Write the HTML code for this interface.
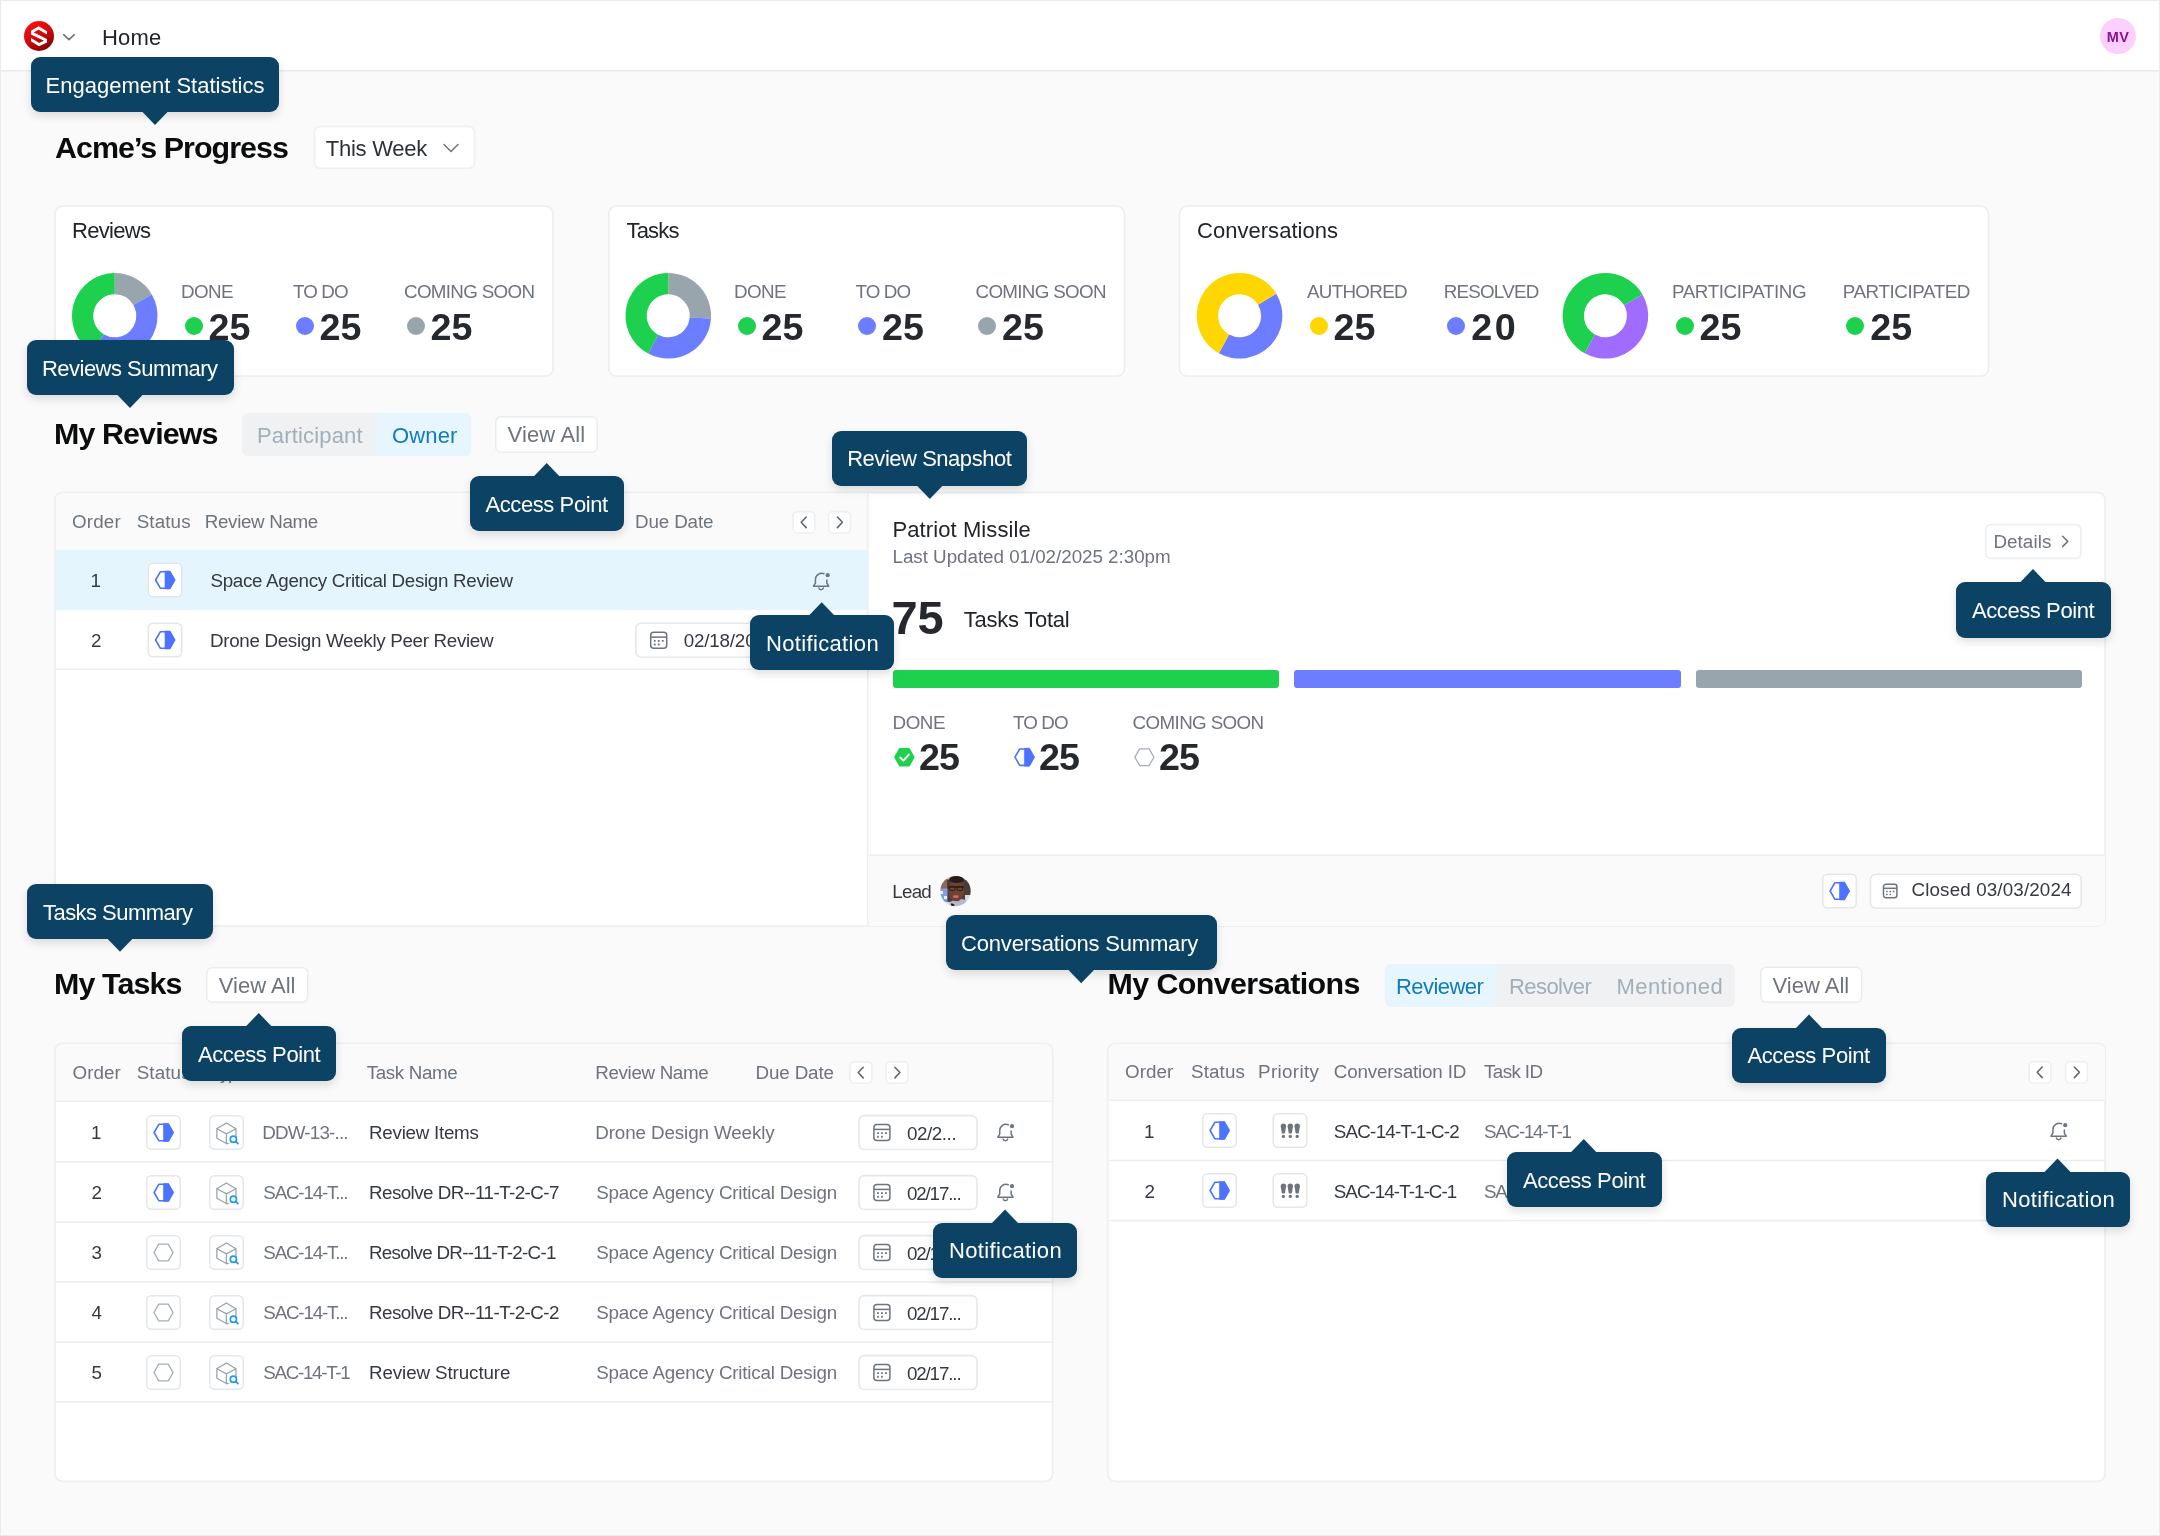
<!DOCTYPE html>
<html lang="en"><head><meta charset="utf-8"><title>Home</title>
<style>
html,body{margin:0;padding:0;}
body{width:2160px;height:1536px;position:relative;overflow:hidden;background:#fafafa;font-family:"Liberation Sans", sans-serif;}
.b{position:absolute;box-sizing:border-box;}
.t{position:absolute;white-space:nowrap;line-height:1;}
.tip{background:#0c4264;border-radius:9px;box-shadow:0 4px 10px rgba(0,0,0,.13);}
</style></head><body>
<div class="b" style="left:0;top:0;width:2160px;height:1536px;will-change:transform">
<div class="b" style="left:0px;top:0px;width:2160px;height:71px;background:#fff;"></div>
<svg class="b" style="left:0px;top:70px;" width="2161" height="3"><rect x="0.00" y="0.00" width="2160" height="1.5" fill="#e9ecef"/></svg>
<svg class="b" style="left:24px;top:21px;" width="32" height="32"><g transform="translate(0.00,0.00)"><defs><linearGradient id="lg" x1="0.25" y1="0" x2="0.8" y2="1"><stop offset="0" stop-color="#ff0d12"/><stop offset="0.5" stop-color="#cf0a0c"/><stop offset="1" stop-color="#7c0000"/></linearGradient></defs>
<circle cx="15" cy="15" r="15" fill="url(#lg)"/>
<clipPath id="lc"><rect x="7.1" y="0" width="15.8" height="30"/></clipPath>
<polyline clip-path="url(#lc)" points="25.6,13.4 14.7,6.9 6.6,11.6 23.2,19.7 15.0,23.6 4.4,17.0" fill="none" stroke="#fff" stroke-width="2.9" stroke-linejoin="miter" stroke-miterlimit="10"/></g></svg>
<svg class="b" style="left:62px;top:32px;" width="16" height="12"><g transform="translate(0.00,0.00)"><polyline points="1.7,2.7 7,7.7 12.3,2.7" fill="none" stroke="#6c757d" stroke-width="1.6" stroke-linecap="round" stroke-linejoin="round"/></g></svg>
<span class="t" style="top:27.02px;font-size:22px;font-weight:400;color:#212529;letter-spacing:0.184px;left:102.00px;">Home</span>
<div class="b" style="left:2100px;top:18px;width:36px;height:36px;background:#fbd0fe;border-radius:18px;"></div>
<span class="t" style="top:30.03px;font-size:14.5px;font-weight:700;color:#8a1496;letter-spacing:0.421px;left:2106.75px;">MV</span>
<span class="t" style="top:132.02px;font-size:30.4px;font-weight:700;color:#0b0c0e;letter-spacing:-0.949px;left:55.00px;">Acme’s Progress</span>
<svg class="b" style="left:310px;top:122px;" width="169" height="51"><rect x="4.50" y="4.50" width="160.00" height="41.80" rx="5.70" fill="#fff" stroke="#edeff1" stroke-width="1.6"/></svg>
<span class="t" style="top:138.02px;font-size:22px;font-weight:400;color:#2d3238;letter-spacing:-0.264px;left:325.80px;">This Week</span>
<svg class="b" style="left:442px;top:142px;" width="20" height="14"><g transform="translate(0.00,0.00)"><polyline points="2,2.5 9,9.5 16,2.5" fill="none" stroke="#6c757d" stroke-width="1.5" stroke-linecap="round" stroke-linejoin="round"/></g></svg>
<svg class="b" style="left:51px;top:202px;" width="506" height="178"><rect x="4.00" y="4.10" width="498.00" height="170.00" rx="7.60" fill="#fff" stroke="#edeff1" stroke-width="1.8"/></svg>
<span class="t" style="top:220.02px;font-size:22px;font-weight:400;color:#212529;letter-spacing:-0.689px;left:72.00px;">Reviews</span>
<svg class="b" style="left:0;top:0" width="2160" height="1536"><path d="M114.75,273.00 A42.8,42.8 0 0 1 151.82,294.40 L133.37,305.05 A21.5,21.5 0 0 0 114.75,294.30 Z" fill="#98a5ad"/><path d="M151.82,294.40 A42.8,42.8 0 0 1 92.71,352.49 L103.68,334.23 A21.5,21.5 0 0 0 133.37,305.05 Z" fill="#6c7dff"/><path d="M92.71,352.49 A42.8,42.8 0 0 1 114.75,273.00 L114.75,294.30 A21.5,21.5 0 0 0 103.68,334.23 Z" fill="#1dd14f"/></svg>
<span class="t" style="top:283.03px;font-size:18.8px;font-weight:400;color:#6c757d;letter-spacing:-0.578px;left:181.00px;">DONE</span>
<div class="b" style="left:184.5px;top:317px;width:18px;height:18px;background:#1dd14f;border-radius:9px;"></div>
<span class="t" style="top:309.03px;font-size:37.7px;font-weight:700;color:#25292e;letter-spacing:0.040px;left:208.50px;">25</span>
<span class="t" style="top:283.03px;font-size:18.8px;font-weight:400;color:#6c757d;letter-spacing:-0.881px;left:293.00px;">TO DO</span>
<div class="b" style="left:295.5px;top:317px;width:18px;height:18px;background:#6c7dff;border-radius:9px;"></div>
<span class="t" style="top:309.03px;font-size:37.7px;font-weight:700;color:#25292e;letter-spacing:0.040px;left:319.50px;">25</span>
<span class="t" style="top:283.03px;font-size:18.8px;font-weight:400;color:#6c757d;letter-spacing:-0.667px;left:404.00px;">COMING SOON</span>
<div class="b" style="left:406.5px;top:317px;width:18px;height:18px;background:#98a5ad;border-radius:9px;"></div>
<span class="t" style="top:309.03px;font-size:37.7px;font-weight:700;color:#25292e;letter-spacing:0.040px;left:430.50px;">25</span>
<svg class="b" style="left:604px;top:202px;" width="525" height="178"><rect x="4.80" y="4.10" width="515.70" height="170.00" rx="7.60" fill="#fff" stroke="#edeff1" stroke-width="1.8"/></svg>
<span class="t" style="top:220.02px;font-size:22px;font-weight:400;color:#212529;letter-spacing:-0.809px;left:626.50px;">Tasks</span>
<svg class="b" style="left:0;top:0" width="2160" height="1536"><path d="M668.25,273.00 A42.8,42.8 0 0 1 710.95,318.79 L689.70,317.30 A21.5,21.5 0 0 0 668.25,294.30 Z" fill="#98a5ad"/><path d="M710.95,318.79 A42.8,42.8 0 0 1 648.16,353.59 L658.16,334.78 A21.5,21.5 0 0 0 689.70,317.30 Z" fill="#6c7dff"/><path d="M648.16,353.59 A42.8,42.8 0 0 1 668.25,273.00 L668.25,294.30 A21.5,21.5 0 0 0 658.16,334.78 Z" fill="#1dd14f"/></svg>
<span class="t" style="top:283.03px;font-size:18.8px;font-weight:400;color:#6c757d;letter-spacing:-0.578px;left:734.00px;">DONE</span>
<div class="b" style="left:737.5px;top:317px;width:18px;height:18px;background:#1dd14f;border-radius:9px;"></div>
<span class="t" style="top:309.03px;font-size:37.7px;font-weight:700;color:#25292e;letter-spacing:0.040px;left:761.50px;">25</span>
<span class="t" style="top:283.03px;font-size:18.8px;font-weight:400;color:#6c757d;letter-spacing:-0.881px;left:855.50px;">TO DO</span>
<div class="b" style="left:858.0px;top:317px;width:18px;height:18px;background:#6c7dff;border-radius:9px;"></div>
<span class="t" style="top:309.03px;font-size:37.7px;font-weight:700;color:#25292e;letter-spacing:0.040px;left:882.00px;">25</span>
<span class="t" style="top:283.03px;font-size:18.8px;font-weight:400;color:#6c757d;letter-spacing:-0.667px;left:975.50px;">COMING SOON</span>
<div class="b" style="left:978.0px;top:317px;width:18px;height:18px;background:#98a5ad;border-radius:9px;"></div>
<span class="t" style="top:309.03px;font-size:37.7px;font-weight:700;color:#25292e;letter-spacing:0.040px;left:1002.00px;">25</span>
<svg class="b" style="left:1175px;top:202px;" width="818" height="178"><rect x="4.60" y="4.10" width="808.90" height="170.00" rx="7.60" fill="#fff" stroke="#edeff1" stroke-width="1.8"/></svg>
<span class="t" style="top:220.02px;font-size:22px;font-weight:400;color:#212529;letter-spacing:0.031px;left:1197.00px;">Conversations</span>
<svg class="b" style="left:0;top:0" width="2160" height="1536"><path d="M1276.29,293.76 A42.8,42.8 0 0 1 1218.85,353.23 L1229.18,334.60 A21.5,21.5 0 0 0 1258.03,304.73 Z" fill="#6c7dff"/><path d="M1218.85,353.23 A42.8,42.8 0 1 1 1276.29,293.76 L1258.03,304.73 A21.5,21.5 0 1 0 1229.18,334.60 Z" fill="#ffd600"/></svg>
<span class="t" style="top:283.03px;font-size:18.8px;font-weight:400;color:#6c757d;letter-spacing:-0.689px;left:1307.00px;">AUTHORED</span>
<div class="b" style="left:1309.5px;top:317px;width:18px;height:18px;background:#ffd600;border-radius:9px;"></div>
<span class="t" style="top:309.03px;font-size:37.7px;font-weight:700;color:#25292e;letter-spacing:0.040px;left:1333.50px;">25</span>
<span class="t" style="top:283.03px;font-size:18.8px;font-weight:400;color:#6c757d;letter-spacing:-0.761px;left:1443.70px;">RESOLVED</span>
<div class="b" style="left:1447.2px;top:317px;width:18px;height:18px;background:#6c7dff;border-radius:9px;"></div>
<span class="t" style="top:309.03px;font-size:37.7px;font-weight:700;color:#25292e;letter-spacing:2.540px;left:1471.20px;">20</span>
<svg class="b" style="left:0;top:0" width="2160" height="1536"><path d="M1642.47,294.40 A42.8,42.8 0 0 1 1584.65,353.23 L1594.98,334.60 A21.5,21.5 0 0 0 1624.02,305.05 Z" fill="#a06bff"/><path d="M1584.65,353.23 A42.8,42.8 0 1 1 1642.47,294.40 L1624.02,305.05 A21.5,21.5 0 1 0 1594.98,334.60 Z" fill="#1dd14f"/></svg>
<span class="t" style="top:283.03px;font-size:18.8px;font-weight:400;color:#6c757d;letter-spacing:-0.406px;left:1672.00px;">PARTICIPATING</span>
<div class="b" style="left:1675.5px;top:317px;width:18px;height:18px;background:#1dd14f;border-radius:9px;"></div>
<span class="t" style="top:309.03px;font-size:37.7px;font-weight:700;color:#25292e;letter-spacing:0.040px;left:1699.50px;">25</span>
<span class="t" style="top:283.03px;font-size:18.8px;font-weight:400;color:#6c757d;letter-spacing:-0.420px;left:1842.80px;">PARTICIPATED</span>
<div class="b" style="left:1846.3px;top:317px;width:18px;height:18px;background:#1dd14f;border-radius:9px;"></div>
<span class="t" style="top:309.03px;font-size:37.7px;font-weight:700;color:#25292e;letter-spacing:0.040px;left:1870.30px;">25</span>
<span class="t" style="top:418.02px;font-size:30.4px;font-weight:700;color:#0b0c0e;letter-spacing:-0.877px;left:54.00px;">My Reviews</span>
<div class="b" style="left:241.5px;top:412.5px;width:229.5px;height:43.5px;background:#eff1f3;border-radius:6px;"></div>
<div class="b" style="left:376px;top:412.5px;width:95px;height:43.5px;background:#e6f5fe;border-radius:6px;"></div>
<span class="t" style="top:425.02px;font-size:22px;font-weight:400;color:#a3afb8;letter-spacing:0.167px;left:257.00px;">Participant</span>
<span class="t" style="top:425.02px;font-size:22px;font-weight:400;color:#117cbd;letter-spacing:0.132px;left:392.00px;">Owner</span>
<svg class="b" style="left:492px;top:413px;" width="109" height="43"><rect x="3.75" y="3.75" width="101.50" height="35.50" rx="5.25" fill="#fff" stroke="#e9ecef" stroke-width="1.5"/></svg>
<span class="t" style="top:424.02px;font-size:22px;font-weight:400;color:#6c757d;letter-spacing:0.148px;left:507.50px;">View All</span>
<svg class="b" style="left:51px;top:488px;" width="2059" height="443"><rect x="4.00" y="4.50" width="2050.20" height="433.70" rx="7.60" fill="#fff" stroke="#edeff1" stroke-width="1.8"/></svg>
<div class="b" style="left:56px;top:493px;width:811.5px;height:56.5px;background:#fafafa;border-top-left-radius:7px;"></div>
<span class="t" style="top:513.03px;font-size:18.8px;font-weight:400;color:#6c757d;letter-spacing:0.187px;left:72.00px;">Order</span>
<span class="t" style="top:513.03px;font-size:18.8px;font-weight:400;color:#6c757d;letter-spacing:0.129px;left:136.70px;">Status</span>
<span class="t" style="top:513.03px;font-size:18.8px;font-weight:400;color:#6c757d;letter-spacing:-0.345px;left:204.80px;">Review Name</span>
<span class="t" style="top:513.03px;font-size:18.8px;font-weight:400;color:#6c757d;letter-spacing:-0.128px;left:635.00px;">Due Date</span>
<svg class="b" style="left:789px;top:507px;" width="30" height="30"><rect x="4.10" y="4.60" width="21.80" height="21.40" rx="4.20" fill="#fff" stroke="#edeff1" stroke-width="1.6"/></svg>
<svg class="b" style="left:792px;top:510px;" width="26" height="26"><g transform="translate(0.30,0.80)"><polyline points="13.9,6.2 8.9,11.5 13.9,16.8" fill="none" stroke="#5f6871" stroke-width="1.6" stroke-linecap="round" stroke-linejoin="round"/></g></svg>
<svg class="b" style="left:824px;top:507px;" width="31" height="30"><rect x="4.60" y="4.60" width="21.80" height="21.40" rx="4.20" fill="#fff" stroke="#edeff1" stroke-width="1.6"/></svg>
<svg class="b" style="left:827px;top:510px;" width="26" height="26"><g transform="translate(0.80,0.80)"><polyline points="9.6,6.2 14.6,11.5 9.6,16.8" fill="none" stroke="#5f6871" stroke-width="1.6" stroke-linecap="round" stroke-linejoin="round"/></g></svg>
<div class="b" style="left:56px;top:549.5px;width:811.5px;height:60px;background:#e5f5fe;"></div>
<svg class="b" style="left:56px;top:668px;" width="813" height="4"><rect x="0.00" y="0.60" width="811.5" height="1.4" fill="#eaecef"/></svg>
<svg class="b" style="left:867px;top:493px;" width="3" height="434"><rect x="0.00" y="0.00" width="1.5" height="433" fill="#eceef0"/></svg>
<span class="t" style="top:572.03px;font-size:18.8px;font-weight:400;color:#343a40;left:90.50px;">1</span>
<svg class="b" style="left:144px;top:559px;" width="42" height="42"><rect x="4.25" y="4.25" width="33.50" height="33.50" rx="4.75" fill="#fff" stroke="#e4e6e8" stroke-width="1.5"/></svg>
<svg class="b" style="left:0;top:0" width="2160" height="1536"><polygon points="155.60,580.00 160.30,571.80 169.70,571.80 174.40,580.00 169.70,588.20 160.30,588.20" fill="none" stroke="#4b73ff" stroke-width="1.6" stroke-linejoin="round"/><polygon points="165.00,571.00 170.10,571.00 175.10,580.00 170.10,589.00 165.00,589.00" fill="#4b73ff" stroke="#4b73ff" stroke-width="0.6" stroke-linejoin="round"/></svg>
<span class="t" style="top:572.03px;font-size:18.8px;font-weight:400;color:#343a40;letter-spacing:-0.313px;left:210.50px;">Space Agency Critical Design Review</span>
<svg class="b" style="left:812px;top:571px;" width="21" height="23"><g transform="translate(0.00,0.00) scale(1.0389,1.0400) translate(-0.0,-0.0)"><path d="M11.6,2.6 A6,6 0 0 0 3.3,8.2 V11.6 L1.4,14.6 H16.1 L14.3,11.6 V8.6" fill="none" stroke="#6c757d" stroke-width="1.45" stroke-linecap="round" stroke-linejoin="round"/><path d="M6.6,16.3 A2.2,2.2 0 0 0 10.9,16.3" fill="none" stroke="#6c757d" stroke-width="1.45" stroke-linecap="round"/><circle cx="15.1" cy="4" r="2" fill="#6c757d"/></g></svg>
<span class="t" style="top:632.03px;font-size:18.8px;font-weight:400;color:#343a40;left:91.00px;">2</span>
<svg class="b" style="left:144px;top:619px;" width="42" height="42"><rect x="4.25" y="4.25" width="33.50" height="33.50" rx="4.75" fill="#fff" stroke="#e4e6e8" stroke-width="1.5"/></svg>
<svg class="b" style="left:0;top:0" width="2160" height="1536"><polygon points="155.60,640.00 160.30,631.80 169.70,631.80 174.40,640.00 169.70,648.20 160.30,648.20" fill="none" stroke="#4b73ff" stroke-width="1.6" stroke-linejoin="round"/><polygon points="165.00,631.00 170.10,631.00 175.10,640.00 170.10,649.00 165.00,649.00" fill="#4b73ff" stroke="#4b73ff" stroke-width="0.6" stroke-linejoin="round"/></svg>
<span class="t" style="top:632.03px;font-size:18.8px;font-weight:400;color:#343a40;letter-spacing:-0.314px;left:210.00px;">Drone Design Weekly Peer Review</span>
<svg class="b" style="left:632px;top:619px;" width="206" height="42"><rect x="3.80" y="4.30" width="198.40" height="33.90" rx="5.20" fill="#fff" stroke="#e6e8ea" stroke-width="1.6"/></svg>
<svg class="b" style="left:649px;top:631px;" width="21" height="21"><g transform="translate(0.90,0.50) scale(1.0000,1.0000) translate(-0.0,-0.0)"><rect x="0.8" y="0.8" width="16" height="16" rx="3" fill="none" stroke="#6c757d" stroke-width="1.50"/><line x1="0.8" y1="5.6" x2="16.8" y2="5.6" stroke="#6c757d" stroke-width="1.50"/><rect x="3.9" y="8.4" width="1.9" height="1.9" rx="0.4" fill="#6c757d"/><rect x="7.9" y="8.4" width="1.9" height="1.9" rx="0.4" fill="#6c757d"/><rect x="11.9" y="8.4" width="1.9" height="1.9" rx="0.4" fill="#6c757d"/><rect x="3.9" y="12.0" width="1.9" height="1.9" rx="0.4" fill="#6c757d"/><rect x="7.9" y="12.0" width="1.9" height="1.9" rx="0.4" fill="#6c757d"/></g></svg>
<span class="t" style="top:632.03px;font-size:18.8px;font-weight:400;color:#343a40;letter-spacing:-0.173px;left:683.70px;">02/18/2025</span>
<span class="t" style="top:519.02px;font-size:22px;font-weight:400;color:#212529;letter-spacing:0.094px;left:892.50px;">Patriot Missile</span>
<span class="t" style="top:548.03px;font-size:18.8px;font-weight:400;color:#6c757d;letter-spacing:-0.023px;left:892.50px;">Last Updated 01/02/2025 2:30pm</span>
<svg class="b" style="left:1982px;top:520px;" width="103" height="43"><rect x="3.80" y="4.60" width="95.10" height="33.80" rx="5.20" fill="#fff" stroke="#edeff1" stroke-width="1.6"/></svg>
<span class="t" style="top:533.03px;font-size:18.8px;font-weight:400;color:#6c757d;letter-spacing:0.081px;left:1993.40px;">Details</span>
<svg class="b" style="left:2058px;top:533px;" width="16" height="19"><g transform="translate(0.00,0.00)"><polyline points="4.6,3.2 9.8,8.4 4.6,13.6" fill="none" stroke="#6c757d" stroke-width="1.5" stroke-linecap="round" stroke-linejoin="round"/></g></svg>
<span class="t" style="top:594.03px;font-size:47px;font-weight:700;color:#25292e;letter-spacing:-0.139px;left:891.60px;">75</span>
<span class="t" style="top:609.02px;font-size:22px;font-weight:400;color:#212529;letter-spacing:-0.243px;left:963.70px;">Tasks Total</span>
<div class="b" style="left:892.5px;top:670px;width:386px;height:18.4px;background:#1dd14f;border-radius:3px;"></div>
<div class="b" style="left:1294px;top:670px;width:386.5px;height:18.4px;background:#6c7dff;border-radius:3px;"></div>
<div class="b" style="left:1695.5px;top:670px;width:386.5px;height:18.4px;background:#98a5ad;border-radius:3px;"></div>
<span class="t" style="top:714.03px;font-size:18.8px;font-weight:400;color:#6c757d;letter-spacing:-0.412px;left:892.50px;">DONE</span>
<span class="t" style="top:714.03px;font-size:18.8px;font-weight:400;color:#6c757d;letter-spacing:-0.881px;left:1013.00px;">TO DO</span>
<span class="t" style="top:714.03px;font-size:18.8px;font-weight:400;color:#6c757d;letter-spacing:-0.617px;left:1132.60px;">COMING SOON</span>
<svg class="b" style="left:0;top:0" width="2160" height="1536"><polygon points="894.95,757.20 899.67,748.75 909.12,748.75 913.85,757.20 909.12,765.65 899.67,765.65" fill="#1dd14f" stroke="#1dd14f" stroke-width="1.5" stroke-linejoin="round"/><polyline points="900.20,757.50 903.40,760.60 908.80,754.60" fill="none" stroke="#fff" stroke-width="2" stroke-linecap="round" stroke-linejoin="round"/><polygon points="1015.00,757.20 1019.70,749.00 1029.10,749.00 1033.80,757.20 1029.10,765.40 1019.70,765.40" fill="none" stroke="#4b73ff" stroke-width="1.6" stroke-linejoin="round"/><polygon points="1024.40,748.20 1029.50,748.20 1034.50,757.20 1029.50,766.20 1024.40,766.20" fill="#4b73ff" stroke="#4b73ff" stroke-width="0.6" stroke-linejoin="round"/><polygon points="1134.85,757.20 1139.62,748.85 1149.18,748.85 1153.95,757.20 1149.18,765.55 1139.62,765.55" fill="none" stroke="#a3aeb6" stroke-width="1.3" stroke-linejoin="round"/></svg>
<span class="t" style="top:739.03px;font-size:37.7px;font-weight:700;color:#25292e;letter-spacing:-0.960px;left:919.00px;">25</span>
<span class="t" style="top:739.03px;font-size:37.7px;font-weight:700;color:#25292e;letter-spacing:-0.960px;left:1039.00px;">25</span>
<span class="t" style="top:739.03px;font-size:37.7px;font-weight:700;color:#25292e;letter-spacing:-0.960px;left:1159.00px;">25</span>
<div class="b" style="left:868.5px;top:855px;width:1236px;height:70.5px;background:#fafafa;border-bottom-right-radius:7px;"></div>
<svg class="b" style="left:868px;top:854px;" width="1238" height="3"><rect x="0.50" y="0.50" width="1236" height="1.4" fill="#eaecef"/></svg>
<span class="t" style="top:883.03px;font-size:18.8px;font-weight:400;color:#343a40;letter-spacing:-0.779px;left:892.30px;">Lead</span>
<svg class="b" style="left:0;top:0" width="2160" height="1536"><defs><clipPath id="av"><circle cx="955.5" cy="891" r="15.2"/></clipPath>
<filter id="avb" x="-10%" y="-10%" width="120%" height="120%"><feGaussianBlur stdDeviation="0.7"/></filter></defs>
<g clip-path="url(#av)"><g filter="url(#avb)">
<rect x="938" y="873" width="36" height="36" fill="#4b3d36"/>
<rect x="938" y="873" width="36" height="6.5" fill="#cfc8b6"/>
<rect x="938" y="879" width="9" height="10" fill="#8d6a58"/>
<rect x="938" y="888.5" width="9.5" height="14" fill="#7f9ee0"/>
<rect x="940" y="891" width="3" height="3" fill="#e9eefb"/><rect x="944" y="896" width="3" height="3" fill="#e9eefb"/>
<rect x="938" y="902" width="12" height="6" fill="#d9dde4"/>
<rect x="965" y="895" width="10" height="14" fill="#d5dbe6"/>
<path d="M948,908 L950,902 Q957,897 966,900 L971,908 Z" fill="#b4b9cc"/>
<path d="M950,908 L951.5,903 L955,905 Z" fill="#1d1a1a"/>
<ellipse cx="956.3" cy="890.5" rx="7.8" ry="10.8" fill="#6f4331"/>
<ellipse cx="956.5" cy="879.5" rx="7.5" ry="3.6" fill="#2a1f1b"/>
<rect x="948.5" y="886.3" width="15.5" height="1.5" fill="#2b1e19"/>
<rect x="949.3" y="886.3" width="5.8" height="4.2" rx="1.6" fill="none" stroke="#2b1e19" stroke-width="1"/>
<rect x="957" y="886.3" width="5.8" height="4.2" rx="1.6" fill="none" stroke="#2b1e19" stroke-width="1"/>
<ellipse cx="955.8" cy="896.6" rx="3" ry="1.4" fill="#cf6f6f"/>
</g></g></svg>
<svg class="b" style="left:1819px;top:870px;" width="41" height="42"><rect x="3.75" y="4.25" width="33.50" height="33.50" rx="4.75" fill="#fff" stroke="#e4e6e8" stroke-width="1.5"/></svg>
<svg class="b" style="left:0;top:0" width="2160" height="1536"><polygon points="1830.10,891.00 1834.80,882.80 1844.20,882.80 1848.90,891.00 1844.20,899.20 1834.80,899.20" fill="none" stroke="#4b73ff" stroke-width="1.6" stroke-linejoin="round"/><polygon points="1839.50,882.00 1844.60,882.00 1849.60,891.00 1844.60,900.00 1839.50,900.00" fill="#4b73ff" stroke="#4b73ff" stroke-width="0.6" stroke-linejoin="round"/></svg>
<svg class="b" style="left:1866px;top:870px;" width="220" height="42"><rect x="4.45" y="4.25" width="210.80" height="33.90" rx="5.25" fill="#fff" stroke="#e4e6e8" stroke-width="1.5"/></svg>
<svg class="b" style="left:1882px;top:883px;" width="18" height="18"><g transform="translate(0.80,0.60) scale(0.8409,0.8409) translate(-0.0,-0.0)"><rect x="0.8" y="0.8" width="16" height="16" rx="3" fill="none" stroke="#6c757d" stroke-width="1.78"/><line x1="0.8" y1="5.6" x2="16.8" y2="5.6" stroke="#6c757d" stroke-width="1.78"/><rect x="3.9" y="8.4" width="1.9" height="1.9" rx="0.4" fill="#6c757d"/><rect x="7.9" y="8.4" width="1.9" height="1.9" rx="0.4" fill="#6c757d"/><rect x="11.9" y="8.4" width="1.9" height="1.9" rx="0.4" fill="#6c757d"/><rect x="3.9" y="12.0" width="1.9" height="1.9" rx="0.4" fill="#6c757d"/><rect x="7.9" y="12.0" width="1.9" height="1.9" rx="0.4" fill="#6c757d"/></g></svg>
<span class="t" style="top:881.03px;font-size:18.8px;font-weight:400;color:#343a40;letter-spacing:0.142px;left:1911.50px;">Closed 03/03/2024</span>
<span class="t" style="top:968.02px;font-size:30.4px;font-weight:700;color:#0b0c0e;letter-spacing:-0.882px;left:54.00px;">My Tasks</span>
<svg class="b" style="left:203px;top:964px;" width="109" height="42"><rect x="3.75" y="3.75" width="101.00" height="34.50" rx="5.25" fill="#fff" stroke="#e9ecef" stroke-width="1.5"/></svg>
<span class="t" style="top:975.02px;font-size:22px;font-weight:400;color:#6c757d;letter-spacing:0.006px;left:218.75px;">View All</span>
<svg class="b" style="left:51px;top:1039px;" width="1006" height="447"><rect x="4.00" y="4.30" width="997.70" height="438.00" rx="7.60" fill="#fff" stroke="#edeff1" stroke-width="1.8"/></svg>
<div class="b" style="left:56px;top:1044px;width:996px;height:57.5px;background:#fafafa;border-radius:7px 7px 0 0;"></div>
<svg class="b" style="left:56px;top:1100px;" width="997" height="3"><rect x="0.00" y="0.60" width="996" height="1.4" fill="#eaecef"/></svg>
<span class="t" style="top:1064.03px;font-size:18.8px;font-weight:400;color:#6c757d;letter-spacing:0.062px;left:72.50px;">Order</span>
<span class="t" style="top:1064.03px;font-size:18.8px;font-weight:400;color:#6c757d;letter-spacing:0.129px;left:136.70px;">Status</span>
<span class="t" style="top:1064.03px;font-size:18.8px;font-weight:400;color:#6c757d;letter-spacing:-1.424px;left:211.00px;">Type</span>
<span class="t" style="top:1064.03px;font-size:18.8px;font-weight:400;color:#6c757d;letter-spacing:-0.373px;left:366.75px;">Task Name</span>
<span class="t" style="top:1064.03px;font-size:18.8px;font-weight:400;color:#6c757d;letter-spacing:-0.345px;left:595.25px;">Review Name</span>
<span class="t" style="top:1064.03px;font-size:18.8px;font-weight:400;color:#6c757d;letter-spacing:-0.128px;left:755.50px;">Due Date</span>
<svg class="b" style="left:846px;top:1058px;" width="30" height="30"><rect x="4.10" y="3.85" width="21.80" height="21.40" rx="4.20" fill="#fff" stroke="#edeff1" stroke-width="1.6"/></svg>
<svg class="b" style="left:849px;top:1061px;" width="26" height="25"><g transform="translate(0.30,0.05)"><polyline points="13.9,6.2 8.9,11.5 13.9,16.8" fill="none" stroke="#5f6871" stroke-width="1.6" stroke-linecap="round" stroke-linejoin="round"/></g></svg>
<svg class="b" style="left:882px;top:1058px;" width="30" height="30"><rect x="4.10" y="3.85" width="21.80" height="21.40" rx="4.20" fill="#fff" stroke="#edeff1" stroke-width="1.6"/></svg>
<svg class="b" style="left:885px;top:1061px;" width="26" height="25"><g transform="translate(0.30,0.05)"><polyline points="9.6,6.2 14.6,11.5 9.6,16.8" fill="none" stroke="#5f6871" stroke-width="1.6" stroke-linecap="round" stroke-linejoin="round"/></g></svg>
<svg class="b" style="left:56px;top:1161px;" width="997" height="3"><rect x="0.00" y="0.30" width="996" height="1.4" fill="#eaecef"/></svg>
<span class="t" style="top:1124.02px;font-size:18.8px;font-weight:400;color:#343a40;left:91.00px;">1</span>
<svg class="b" style="left:143px;top:1112px;" width="41" height="41"><rect x="3.75" y="3.75" width="33.50" height="33.50" rx="4.75" fill="#fff" stroke="#e4e6e8" stroke-width="1.5"/></svg>
<svg class="b" style="left:0;top:0" width="2160" height="1536"><polygon points="154.10,1132.50 158.80,1124.30 168.20,1124.30 172.90,1132.50 168.20,1140.70 158.80,1140.70" fill="none" stroke="#4b73ff" stroke-width="1.6" stroke-linejoin="round"/><polygon points="163.50,1123.50 168.60,1123.50 173.60,1132.50 168.60,1141.50 163.50,1141.50" fill="#4b73ff" stroke="#4b73ff" stroke-width="0.6" stroke-linejoin="round"/></svg>
<svg class="b" style="left:206px;top:1112px;" width="41" height="41"><rect x="3.75" y="3.75" width="33.50" height="33.50" rx="4.75" fill="#fff" stroke="#e4e6e8" stroke-width="1.5"/></svg>
<svg class="b" style="left:0;top:0" width="2160" height="1536"><path d="M235.9,1136.5 V1128.7 L226.4,1123.0 L216.9,1128.7 V1138.3 L226.4,1143.5 H228.2" fill="none" stroke="#98a5ad" stroke-width="1.3" stroke-linejoin="round" stroke-linecap="round"/><path d="M216.9,1128.7 L226.4,1133.9 L235.9,1128.7 M226.4,1133.9 V1143.5" fill="none" stroke="#98a5ad" stroke-width="1.3" stroke-linejoin="round" stroke-linecap="round"/><circle cx="233.4" cy="1139.2" r="3.1" fill="#fff" stroke="#1c9bef" stroke-width="1.7"/><line x1="235.9" y1="1141.6" x2="238" y2="1143.6" stroke="#1c9bef" stroke-width="1.7" stroke-linecap="round"/></svg>
<span class="t" style="top:1124.02px;font-size:18.8px;font-weight:400;color:#6c757d;letter-spacing:-0.817px;left:262.30px;">DDW-13-...</span>
<span class="t" style="top:1124.02px;font-size:18.8px;font-weight:400;color:#343a40;letter-spacing:-0.257px;left:369.00px;">Review Items</span>
<span class="t" style="top:1124.02px;font-size:18.8px;font-weight:400;color:#6c757d;letter-spacing:-0.105px;left:595.25px;">Drone Design Weekly</span>
<svg class="b" style="left:855px;top:1111px;" width="126" height="43"><rect x="4.00" y="4.60" width="118.00" height="33.90" rx="5.20" fill="#fff" stroke="#e6e8ea" stroke-width="1.6"/></svg>
<svg class="b" style="left:873px;top:1123px;" width="20" height="21"><g transform="translate(0.10,0.80) scale(1.0000,1.0000) translate(-0.0,-0.0)"><rect x="0.8" y="0.8" width="16" height="16" rx="3" fill="none" stroke="#6c757d" stroke-width="1.50"/><line x1="0.8" y1="5.6" x2="16.8" y2="5.6" stroke="#6c757d" stroke-width="1.50"/><rect x="3.9" y="8.4" width="1.9" height="1.9" rx="0.4" fill="#6c757d"/><rect x="7.9" y="8.4" width="1.9" height="1.9" rx="0.4" fill="#6c757d"/><rect x="11.9" y="8.4" width="1.9" height="1.9" rx="0.4" fill="#6c757d"/><rect x="3.9" y="12.0" width="1.9" height="1.9" rx="0.4" fill="#6c757d"/><rect x="7.9" y="12.0" width="1.9" height="1.9" rx="0.4" fill="#6c757d"/></g></svg>
<span class="t" style="top:1125.02px;font-size:18.8px;font-weight:400;color:#343a40;letter-spacing:-0.415px;left:906.90px;">02/2...</span>
<svg class="b" style="left:996px;top:1122px;" width="21" height="23"><g transform="translate(0.30,0.00) scale(1.0389,1.0400) translate(-0.0,-0.0)"><path d="M11.6,2.6 A6,6 0 0 0 3.3,8.2 V11.6 L1.4,14.6 H16.1 L14.3,11.6 V8.6" fill="none" stroke="#6c757d" stroke-width="1.45" stroke-linecap="round" stroke-linejoin="round"/><path d="M6.6,16.3 A2.2,2.2 0 0 0 10.9,16.3" fill="none" stroke="#6c757d" stroke-width="1.45" stroke-linecap="round"/><circle cx="15.1" cy="4" r="2" fill="#6c757d"/></g></svg>
<svg class="b" style="left:56px;top:1221px;" width="997" height="3"><rect x="0.00" y="0.30" width="996" height="1.4" fill="#eaecef"/></svg>
<span class="t" style="top:1184.02px;font-size:18.8px;font-weight:400;color:#343a40;left:91.50px;">2</span>
<svg class="b" style="left:143px;top:1172px;" width="41" height="41"><rect x="3.75" y="3.75" width="33.50" height="33.50" rx="4.75" fill="#fff" stroke="#e4e6e8" stroke-width="1.5"/></svg>
<svg class="b" style="left:0;top:0" width="2160" height="1536"><polygon points="154.10,1192.50 158.80,1184.30 168.20,1184.30 172.90,1192.50 168.20,1200.70 158.80,1200.70" fill="none" stroke="#4b73ff" stroke-width="1.6" stroke-linejoin="round"/><polygon points="163.50,1183.50 168.60,1183.50 173.60,1192.50 168.60,1201.50 163.50,1201.50" fill="#4b73ff" stroke="#4b73ff" stroke-width="0.6" stroke-linejoin="round"/></svg>
<svg class="b" style="left:206px;top:1172px;" width="41" height="41"><rect x="3.75" y="3.75" width="33.50" height="33.50" rx="4.75" fill="#fff" stroke="#e4e6e8" stroke-width="1.5"/></svg>
<svg class="b" style="left:0;top:0" width="2160" height="1536"><path d="M235.9,1196.5 V1188.7 L226.4,1183.0 L216.9,1188.7 V1198.3 L226.4,1203.5 H228.2" fill="none" stroke="#98a5ad" stroke-width="1.3" stroke-linejoin="round" stroke-linecap="round"/><path d="M216.9,1188.7 L226.4,1193.9 L235.9,1188.7 M226.4,1193.9 V1203.5" fill="none" stroke="#98a5ad" stroke-width="1.3" stroke-linejoin="round" stroke-linecap="round"/><circle cx="233.4" cy="1199.2" r="3.1" fill="#fff" stroke="#1c9bef" stroke-width="1.7"/><line x1="235.9" y1="1201.6" x2="238" y2="1203.6" stroke="#1c9bef" stroke-width="1.7" stroke-linecap="round"/></svg>
<span class="t" style="top:1184.02px;font-size:18.8px;font-weight:400;color:#6c757d;letter-spacing:-1.184px;left:263.30px;">SAC-14-T...</span>
<span class="t" style="top:1184.02px;font-size:18.8px;font-weight:400;color:#343a40;letter-spacing:-0.555px;left:369.00px;">Resolve DR--11-T-2-C-7</span>
<span class="t" style="top:1184.02px;font-size:18.8px;font-weight:400;color:#6c757d;letter-spacing:-0.202px;left:596.25px;">Space Agency Critical Design</span>
<svg class="b" style="left:855px;top:1171px;" width="126" height="43"><rect x="4.00" y="4.60" width="118.00" height="33.90" rx="5.20" fill="#fff" stroke="#e6e8ea" stroke-width="1.6"/></svg>
<svg class="b" style="left:873px;top:1183px;" width="20" height="21"><g transform="translate(0.10,0.80) scale(1.0000,1.0000) translate(-0.0,-0.0)"><rect x="0.8" y="0.8" width="16" height="16" rx="3" fill="none" stroke="#6c757d" stroke-width="1.50"/><line x1="0.8" y1="5.6" x2="16.8" y2="5.6" stroke="#6c757d" stroke-width="1.50"/><rect x="3.9" y="8.4" width="1.9" height="1.9" rx="0.4" fill="#6c757d"/><rect x="7.9" y="8.4" width="1.9" height="1.9" rx="0.4" fill="#6c757d"/><rect x="11.9" y="8.4" width="1.9" height="1.9" rx="0.4" fill="#6c757d"/><rect x="3.9" y="12.0" width="1.9" height="1.9" rx="0.4" fill="#6c757d"/><rect x="7.9" y="12.0" width="1.9" height="1.9" rx="0.4" fill="#6c757d"/></g></svg>
<span class="t" style="top:1185.02px;font-size:18.8px;font-weight:400;color:#343a40;letter-spacing:-1.134px;left:906.90px;">02/17...</span>
<svg class="b" style="left:996px;top:1182px;" width="21" height="23"><g transform="translate(0.30,0.00) scale(1.0389,1.0400) translate(-0.0,-0.0)"><path d="M11.6,2.6 A6,6 0 0 0 3.3,8.2 V11.6 L1.4,14.6 H16.1 L14.3,11.6 V8.6" fill="none" stroke="#6c757d" stroke-width="1.45" stroke-linecap="round" stroke-linejoin="round"/><path d="M6.6,16.3 A2.2,2.2 0 0 0 10.9,16.3" fill="none" stroke="#6c757d" stroke-width="1.45" stroke-linecap="round"/><circle cx="15.1" cy="4" r="2" fill="#6c757d"/></g></svg>
<svg class="b" style="left:56px;top:1281px;" width="997" height="3"><rect x="0.00" y="0.30" width="996" height="1.4" fill="#eaecef"/></svg>
<span class="t" style="top:1244.02px;font-size:18.8px;font-weight:400;color:#343a40;left:91.50px;">3</span>
<svg class="b" style="left:143px;top:1232px;" width="41" height="41"><rect x="3.75" y="3.75" width="33.50" height="33.50" rx="4.75" fill="#fff" stroke="#e4e6e8" stroke-width="1.5"/></svg>
<svg class="b" style="left:0;top:0" width="2160" height="1536"><polygon points="153.95,1252.50 158.72,1244.15 168.28,1244.15 173.05,1252.50 168.28,1260.85 158.72,1260.85" fill="none" stroke="#a3aeb6" stroke-width="1.3" stroke-linejoin="round"/></svg>
<svg class="b" style="left:206px;top:1232px;" width="41" height="41"><rect x="3.75" y="3.75" width="33.50" height="33.50" rx="4.75" fill="#fff" stroke="#e4e6e8" stroke-width="1.5"/></svg>
<svg class="b" style="left:0;top:0" width="2160" height="1536"><path d="M235.9,1256.5 V1248.7 L226.4,1243.0 L216.9,1248.7 V1258.3 L226.4,1263.5 H228.2" fill="none" stroke="#98a5ad" stroke-width="1.3" stroke-linejoin="round" stroke-linecap="round"/><path d="M216.9,1248.7 L226.4,1253.9 L235.9,1248.7 M226.4,1253.9 V1263.5" fill="none" stroke="#98a5ad" stroke-width="1.3" stroke-linejoin="round" stroke-linecap="round"/><circle cx="233.4" cy="1259.2" r="3.1" fill="#fff" stroke="#1c9bef" stroke-width="1.7"/><line x1="235.9" y1="1261.6" x2="238" y2="1263.6" stroke="#1c9bef" stroke-width="1.7" stroke-linecap="round"/></svg>
<span class="t" style="top:1244.02px;font-size:18.8px;font-weight:400;color:#6c757d;letter-spacing:-1.184px;left:263.30px;">SAC-14-T...</span>
<span class="t" style="top:1244.02px;font-size:18.8px;font-weight:400;color:#343a40;letter-spacing:-0.698px;left:369.00px;">Resolve DR--11-T-2-C-1</span>
<span class="t" style="top:1244.02px;font-size:18.8px;font-weight:400;color:#6c757d;letter-spacing:-0.202px;left:596.25px;">Space Agency Critical Design</span>
<svg class="b" style="left:855px;top:1231px;" width="126" height="43"><rect x="4.00" y="4.60" width="118.00" height="33.90" rx="5.20" fill="#fff" stroke="#e6e8ea" stroke-width="1.6"/></svg>
<svg class="b" style="left:873px;top:1243px;" width="20" height="21"><g transform="translate(0.10,0.80) scale(1.0000,1.0000) translate(-0.0,-0.0)"><rect x="0.8" y="0.8" width="16" height="16" rx="3" fill="none" stroke="#6c757d" stroke-width="1.50"/><line x1="0.8" y1="5.6" x2="16.8" y2="5.6" stroke="#6c757d" stroke-width="1.50"/><rect x="3.9" y="8.4" width="1.9" height="1.9" rx="0.4" fill="#6c757d"/><rect x="7.9" y="8.4" width="1.9" height="1.9" rx="0.4" fill="#6c757d"/><rect x="11.9" y="8.4" width="1.9" height="1.9" rx="0.4" fill="#6c757d"/><rect x="3.9" y="12.0" width="1.9" height="1.9" rx="0.4" fill="#6c757d"/><rect x="7.9" y="12.0" width="1.9" height="1.9" rx="0.4" fill="#6c757d"/></g></svg>
<span class="t" style="top:1245.02px;font-size:18.8px;font-weight:400;color:#343a40;letter-spacing:-1.134px;left:906.90px;">02/17...</span>
<svg class="b" style="left:56px;top:1341px;" width="997" height="3"><rect x="0.00" y="0.30" width="996" height="1.4" fill="#eaecef"/></svg>
<span class="t" style="top:1304.02px;font-size:18.8px;font-weight:400;color:#343a40;left:91.50px;">4</span>
<svg class="b" style="left:143px;top:1292px;" width="41" height="41"><rect x="3.75" y="3.75" width="33.50" height="33.50" rx="4.75" fill="#fff" stroke="#e4e6e8" stroke-width="1.5"/></svg>
<svg class="b" style="left:0;top:0" width="2160" height="1536"><polygon points="153.95,1312.50 158.72,1304.15 168.28,1304.15 173.05,1312.50 168.28,1320.85 158.72,1320.85" fill="none" stroke="#a3aeb6" stroke-width="1.3" stroke-linejoin="round"/></svg>
<svg class="b" style="left:206px;top:1292px;" width="41" height="41"><rect x="3.75" y="3.75" width="33.50" height="33.50" rx="4.75" fill="#fff" stroke="#e4e6e8" stroke-width="1.5"/></svg>
<svg class="b" style="left:0;top:0" width="2160" height="1536"><path d="M235.9,1316.5 V1308.7 L226.4,1303.0 L216.9,1308.7 V1318.3 L226.4,1323.5 H228.2" fill="none" stroke="#98a5ad" stroke-width="1.3" stroke-linejoin="round" stroke-linecap="round"/><path d="M216.9,1308.7 L226.4,1313.9 L235.9,1308.7 M226.4,1313.9 V1323.5" fill="none" stroke="#98a5ad" stroke-width="1.3" stroke-linejoin="round" stroke-linecap="round"/><circle cx="233.4" cy="1319.2" r="3.1" fill="#fff" stroke="#1c9bef" stroke-width="1.7"/><line x1="235.9" y1="1321.6" x2="238" y2="1323.6" stroke="#1c9bef" stroke-width="1.7" stroke-linecap="round"/></svg>
<span class="t" style="top:1304.02px;font-size:18.8px;font-weight:400;color:#6c757d;letter-spacing:-1.184px;left:263.30px;">SAC-14-T...</span>
<span class="t" style="top:1304.02px;font-size:18.8px;font-weight:400;color:#343a40;letter-spacing:-0.555px;left:369.00px;">Resolve DR--11-T-2-C-2</span>
<span class="t" style="top:1304.02px;font-size:18.8px;font-weight:400;color:#6c757d;letter-spacing:-0.202px;left:596.25px;">Space Agency Critical Design</span>
<svg class="b" style="left:855px;top:1291px;" width="126" height="43"><rect x="4.00" y="4.60" width="118.00" height="33.90" rx="5.20" fill="#fff" stroke="#e6e8ea" stroke-width="1.6"/></svg>
<svg class="b" style="left:873px;top:1303px;" width="20" height="21"><g transform="translate(0.10,0.80) scale(1.0000,1.0000) translate(-0.0,-0.0)"><rect x="0.8" y="0.8" width="16" height="16" rx="3" fill="none" stroke="#6c757d" stroke-width="1.50"/><line x1="0.8" y1="5.6" x2="16.8" y2="5.6" stroke="#6c757d" stroke-width="1.50"/><rect x="3.9" y="8.4" width="1.9" height="1.9" rx="0.4" fill="#6c757d"/><rect x="7.9" y="8.4" width="1.9" height="1.9" rx="0.4" fill="#6c757d"/><rect x="11.9" y="8.4" width="1.9" height="1.9" rx="0.4" fill="#6c757d"/><rect x="3.9" y="12.0" width="1.9" height="1.9" rx="0.4" fill="#6c757d"/><rect x="7.9" y="12.0" width="1.9" height="1.9" rx="0.4" fill="#6c757d"/></g></svg>
<span class="t" style="top:1305.02px;font-size:18.8px;font-weight:400;color:#343a40;letter-spacing:-1.134px;left:906.90px;">02/17...</span>
<svg class="b" style="left:56px;top:1401px;" width="997" height="3"><rect x="0.00" y="0.30" width="996" height="1.4" fill="#eaecef"/></svg>
<span class="t" style="top:1364.02px;font-size:18.8px;font-weight:400;color:#343a40;left:91.50px;">5</span>
<svg class="b" style="left:143px;top:1352px;" width="41" height="41"><rect x="3.75" y="3.75" width="33.50" height="33.50" rx="4.75" fill="#fff" stroke="#e4e6e8" stroke-width="1.5"/></svg>
<svg class="b" style="left:0;top:0" width="2160" height="1536"><polygon points="153.95,1372.50 158.72,1364.15 168.28,1364.15 173.05,1372.50 168.28,1380.85 158.72,1380.85" fill="none" stroke="#a3aeb6" stroke-width="1.3" stroke-linejoin="round"/></svg>
<svg class="b" style="left:206px;top:1352px;" width="41" height="41"><rect x="3.75" y="3.75" width="33.50" height="33.50" rx="4.75" fill="#fff" stroke="#e4e6e8" stroke-width="1.5"/></svg>
<svg class="b" style="left:0;top:0" width="2160" height="1536"><path d="M235.9,1376.5 V1368.7 L226.4,1363.0 L216.9,1368.7 V1378.3 L226.4,1383.5 H228.2" fill="none" stroke="#98a5ad" stroke-width="1.3" stroke-linejoin="round" stroke-linecap="round"/><path d="M216.9,1368.7 L226.4,1373.9 L235.9,1368.7 M226.4,1373.9 V1383.5" fill="none" stroke="#98a5ad" stroke-width="1.3" stroke-linejoin="round" stroke-linecap="round"/><circle cx="233.4" cy="1379.2" r="3.1" fill="#fff" stroke="#1c9bef" stroke-width="1.7"/><line x1="235.9" y1="1381.6" x2="238" y2="1383.6" stroke="#1c9bef" stroke-width="1.7" stroke-linecap="round"/></svg>
<span class="t" style="top:1364.02px;font-size:18.8px;font-weight:400;color:#6c757d;letter-spacing:-1.301px;left:263.30px;">SAC-14-T-1</span>
<span class="t" style="top:1364.02px;font-size:18.8px;font-weight:400;color:#343a40;letter-spacing:-0.103px;left:369.00px;">Review Structure</span>
<span class="t" style="top:1364.02px;font-size:18.8px;font-weight:400;color:#6c757d;letter-spacing:-0.202px;left:596.25px;">Space Agency Critical Design</span>
<svg class="b" style="left:855px;top:1351px;" width="126" height="43"><rect x="4.00" y="4.60" width="118.00" height="33.90" rx="5.20" fill="#fff" stroke="#e6e8ea" stroke-width="1.6"/></svg>
<svg class="b" style="left:873px;top:1363px;" width="20" height="21"><g transform="translate(0.10,0.80) scale(1.0000,1.0000) translate(-0.0,-0.0)"><rect x="0.8" y="0.8" width="16" height="16" rx="3" fill="none" stroke="#6c757d" stroke-width="1.50"/><line x1="0.8" y1="5.6" x2="16.8" y2="5.6" stroke="#6c757d" stroke-width="1.50"/><rect x="3.9" y="8.4" width="1.9" height="1.9" rx="0.4" fill="#6c757d"/><rect x="7.9" y="8.4" width="1.9" height="1.9" rx="0.4" fill="#6c757d"/><rect x="11.9" y="8.4" width="1.9" height="1.9" rx="0.4" fill="#6c757d"/><rect x="3.9" y="12.0" width="1.9" height="1.9" rx="0.4" fill="#6c757d"/><rect x="7.9" y="12.0" width="1.9" height="1.9" rx="0.4" fill="#6c757d"/></g></svg>
<span class="t" style="top:1365.02px;font-size:18.8px;font-weight:400;color:#343a40;letter-spacing:-1.134px;left:906.90px;">02/17...</span>
<span class="t" style="top:968.02px;font-size:30.4px;font-weight:700;color:#0b0c0e;letter-spacing:-0.591px;left:1107.50px;">My Conversations</span>
<div class="b" style="left:1385px;top:963.5px;width:350px;height:43px;background:#eff1f3;border-radius:6px;"></div>
<div class="b" style="left:1385px;top:963.5px;width:112px;height:43px;background:#e6f5fe;border-radius:6px;"></div>
<span class="t" style="top:976.02px;font-size:22px;font-weight:400;color:#117cbd;letter-spacing:-0.553px;left:1396.00px;">Reviewer</span>
<span class="t" style="top:976.02px;font-size:22px;font-weight:400;color:#a3afb8;letter-spacing:-0.569px;left:1509.00px;">Resolver</span>
<span class="t" style="top:976.02px;font-size:22px;font-weight:400;color:#a3afb8;letter-spacing:0.437px;left:1616.50px;">Mentioned</span>
<svg class="b" style="left:1757px;top:963px;" width="109" height="43"><rect x="3.75" y="4.25" width="101.00" height="35.00" rx="5.25" fill="#fff" stroke="#e9ecef" stroke-width="1.5"/></svg>
<span class="t" style="top:975.02px;font-size:22px;font-weight:400;color:#6c757d;letter-spacing:0.006px;left:1772.50px;">View All</span>
<svg class="b" style="left:1103px;top:1039px;" width="1007" height="447"><rect x="4.80" y="4.30" width="997.40" height="438.00" rx="7.60" fill="#fff" stroke="#edeff1" stroke-width="1.8"/></svg>
<div class="b" style="left:1109px;top:1044px;width:995.5px;height:56px;background:#fafafa;border-radius:7px 7px 0 0;"></div>
<svg class="b" style="left:1109px;top:1099px;" width="997" height="3"><rect x="0.00" y="0.60" width="995.5" height="1.4" fill="#eaecef"/></svg>
<span class="t" style="top:1063.03px;font-size:18.8px;font-weight:400;color:#6c757d;letter-spacing:0.062px;left:1125.00px;">Order</span>
<span class="t" style="top:1063.03px;font-size:18.8px;font-weight:400;color:#6c757d;letter-spacing:0.129px;left:1191.00px;">Status</span>
<span class="t" style="top:1063.03px;font-size:18.8px;font-weight:400;color:#6c757d;letter-spacing:0.351px;left:1258.00px;">Priority</span>
<span class="t" style="top:1063.03px;font-size:18.8px;font-weight:400;color:#6c757d;letter-spacing:-0.150px;left:1333.75px;">Conversation ID</span>
<span class="t" style="top:1063.03px;font-size:18.8px;font-weight:400;color:#6c757d;letter-spacing:-0.592px;left:1484.00px;">Task ID</span>
<svg class="b" style="left:2025px;top:1057px;" width="30" height="30"><rect x="4.10" y="4.60" width="21.80" height="21.40" rx="4.20" fill="#fff" stroke="#edeff1" stroke-width="1.6"/></svg>
<svg class="b" style="left:2028px;top:1060px;" width="26" height="26"><g transform="translate(0.30,0.80)"><polyline points="13.9,6.2 8.9,11.5 13.9,16.8" fill="none" stroke="#5f6871" stroke-width="1.6" stroke-linecap="round" stroke-linejoin="round"/></g></svg>
<svg class="b" style="left:2061px;top:1057px;" width="31" height="30"><rect x="4.60" y="4.60" width="21.80" height="21.40" rx="4.20" fill="#fff" stroke="#edeff1" stroke-width="1.6"/></svg>
<svg class="b" style="left:2064px;top:1060px;" width="26" height="26"><g transform="translate(0.80,0.80)"><polyline points="9.6,6.2 14.6,11.5 9.6,16.8" fill="none" stroke="#5f6871" stroke-width="1.6" stroke-linecap="round" stroke-linejoin="round"/></g></svg>
<svg class="b" style="left:1109px;top:1159px;" width="997" height="4"><rect x="0.00" y="0.80" width="995.5" height="1.4" fill="#eaecef"/></svg>
<span class="t" style="top:1123.03px;font-size:18.8px;font-weight:400;color:#343a40;left:1144.00px;">1</span>
<svg class="b" style="left:1199px;top:1110px;" width="41" height="41"><rect x="3.75" y="3.75" width="33.50" height="33.50" rx="4.75" fill="#fff" stroke="#e4e6e8" stroke-width="1.5"/></svg>
<svg class="b" style="left:0;top:0" width="2160" height="1536"><polygon points="1210.10,1130.50 1214.80,1122.30 1224.20,1122.30 1228.90,1130.50 1224.20,1138.70 1214.80,1138.70" fill="none" stroke="#4b73ff" stroke-width="1.6" stroke-linejoin="round"/><polygon points="1219.50,1121.50 1224.60,1121.50 1229.60,1130.50 1224.60,1139.50 1219.50,1139.50" fill="#4b73ff" stroke="#4b73ff" stroke-width="0.6" stroke-linejoin="round"/></svg>
<svg class="b" style="left:1269px;top:1110px;" width="42" height="41"><rect x="4.25" y="3.75" width="33.50" height="33.50" rx="4.75" fill="#fff" stroke="#e4e6e8" stroke-width="1.5"/></svg>
<svg class="b" style="left:0;top:0" width="2160" height="1536"><path d="M1280.70,1126.20 Q1280.70,1123.60 1283.40,1123.60 Q1286.10,1123.60 1286.10,1126.20 L1285.00,1133.00 Q1283.40,1134.20 1281.80,1133.00 Z" fill="#6c757d"/><circle cx="1283.40" cy="1136.40" r="1.65" fill="#6c757d"/><path d="M1287.60,1126.20 Q1287.60,1123.60 1290.30,1123.60 Q1293.00,1123.60 1293.00,1126.20 L1291.90,1133.00 Q1290.30,1134.20 1288.70,1133.00 Z" fill="#6c757d"/><circle cx="1290.30" cy="1136.40" r="1.65" fill="#6c757d"/><path d="M1294.50,1126.20 Q1294.50,1123.60 1297.20,1123.60 Q1299.90,1123.60 1299.90,1126.20 L1298.80,1133.00 Q1297.20,1134.20 1295.60,1133.00 Z" fill="#6c757d"/><circle cx="1297.20" cy="1136.40" r="1.65" fill="#6c757d"/></svg>
<span class="t" style="top:1123.03px;font-size:18.8px;font-weight:400;color:#343a40;letter-spacing:-0.748px;left:1333.75px;">SAC-14-T-1-C-2</span>
<span class="t" style="top:1123.03px;font-size:18.8px;font-weight:400;color:#6c757d;letter-spacing:-1.245px;left:1484.00px;">SAC-14-T-1</span>
<svg class="b" style="left:2049px;top:1121px;" width="22" height="23"><g transform="translate(0.50,0.00) scale(1.0389,1.0400) translate(-0.0,-0.0)"><path d="M11.6,2.6 A6,6 0 0 0 3.3,8.2 V11.6 L1.4,14.6 H16.1 L14.3,11.6 V8.6" fill="none" stroke="#6c757d" stroke-width="1.45" stroke-linecap="round" stroke-linejoin="round"/><path d="M6.6,16.3 A2.2,2.2 0 0 0 10.9,16.3" fill="none" stroke="#6c757d" stroke-width="1.45" stroke-linecap="round"/><circle cx="15.1" cy="4" r="2" fill="#6c757d"/></g></svg>
<svg class="b" style="left:1109px;top:1219px;" width="997" height="4"><rect x="0.00" y="0.80" width="995.5" height="1.4" fill="#eaecef"/></svg>
<span class="t" style="top:1183.03px;font-size:18.8px;font-weight:400;color:#343a40;left:1144.50px;">2</span>
<svg class="b" style="left:1199px;top:1170px;" width="41" height="41"><rect x="3.75" y="3.75" width="33.50" height="33.50" rx="4.75" fill="#fff" stroke="#e4e6e8" stroke-width="1.5"/></svg>
<svg class="b" style="left:0;top:0" width="2160" height="1536"><polygon points="1210.10,1190.50 1214.80,1182.30 1224.20,1182.30 1228.90,1190.50 1224.20,1198.70 1214.80,1198.70" fill="none" stroke="#4b73ff" stroke-width="1.6" stroke-linejoin="round"/><polygon points="1219.50,1181.50 1224.60,1181.50 1229.60,1190.50 1224.60,1199.50 1219.50,1199.50" fill="#4b73ff" stroke="#4b73ff" stroke-width="0.6" stroke-linejoin="round"/></svg>
<svg class="b" style="left:1269px;top:1170px;" width="42" height="41"><rect x="4.25" y="3.75" width="33.50" height="33.50" rx="4.75" fill="#fff" stroke="#e4e6e8" stroke-width="1.5"/></svg>
<svg class="b" style="left:0;top:0" width="2160" height="1536"><path d="M1280.70,1186.20 Q1280.70,1183.60 1283.40,1183.60 Q1286.10,1183.60 1286.10,1186.20 L1285.00,1193.00 Q1283.40,1194.20 1281.80,1193.00 Z" fill="#6c757d"/><circle cx="1283.40" cy="1196.40" r="1.65" fill="#6c757d"/><path d="M1287.60,1186.20 Q1287.60,1183.60 1290.30,1183.60 Q1293.00,1183.60 1293.00,1186.20 L1291.90,1193.00 Q1290.30,1194.20 1288.70,1193.00 Z" fill="#6c757d"/><circle cx="1290.30" cy="1196.40" r="1.65" fill="#6c757d"/><path d="M1294.50,1186.20 Q1294.50,1183.60 1297.20,1183.60 Q1299.90,1183.60 1299.90,1186.20 L1298.80,1193.00 Q1297.20,1194.20 1295.60,1193.00 Z" fill="#6c757d"/><circle cx="1297.20" cy="1196.40" r="1.65" fill="#6c757d"/></svg>
<span class="t" style="top:1183.03px;font-size:18.8px;font-weight:400;color:#343a40;letter-spacing:-0.940px;left:1333.75px;">SAC-14-T-1-C-1</span>
<span class="t" style="top:1183.03px;font-size:18.8px;font-weight:400;color:#6c757d;letter-spacing:-1.245px;left:1484.00px;">SAC-14-T-1</span>
<div class="b tip" style="left:30.5px;top:57px;width:248.5px;height:55px;"></div>
<svg class="b" style="left:0;top:0;pointer-events:none" width="2160" height="1536"><polygon points="142,111.5 168,111.5 155,125" fill="#0c4264"/></svg>
<span class="t" style="top:75.03px;font-size:22px;font-weight:400;color:#fff;letter-spacing:0.005px;left:45.50px;">Engagement Statistics</span>
<div class="b tip" style="left:27px;top:340px;width:207px;height:55px;"></div>
<svg class="b" style="left:0;top:0;pointer-events:none" width="2160" height="1536"><polygon points="117,394.5 143,394.5 130,408" fill="#0c4264"/></svg>
<span class="t" style="top:358.03px;font-size:22px;font-weight:400;color:#fff;letter-spacing:-0.526px;left:42.00px;">Reviews Summary</span>
<div class="b tip" style="left:469.5px;top:476px;width:154.5px;height:55px;"></div>
<svg class="b" style="left:0;top:0;pointer-events:none" width="2160" height="1536"><polygon points="533.7,476.5 559.7,476.5 546.7,463" fill="#0c4264"/></svg>
<span class="t" style="top:494.03px;font-size:22px;font-weight:400;color:#fff;letter-spacing:-0.414px;left:485.50px;">Access Point</span>
<div class="b tip" style="left:832.2px;top:430.5px;width:195px;height:55.4px;"></div>
<svg class="b" style="left:0;top:0;pointer-events:none" width="2160" height="1536"><polygon points="916.8,485.4 942.8,485.4 929.8,498.9" fill="#0c4264"/></svg>
<span class="t" style="top:448.02px;font-size:22px;font-weight:400;color:#fff;letter-spacing:-0.471px;left:847.20px;">Review Snapshot</span>
<div class="b tip" style="left:750px;top:615.3px;width:144px;height:55px;"></div>
<svg class="b" style="left:0;top:0;pointer-events:none" width="2160" height="1536"><polygon points="808.7,615.8 834.7,615.8 821.7,602.3" fill="#0c4264"/></svg>
<span class="t" style="top:633.03px;font-size:22px;font-weight:400;color:#fff;letter-spacing:0.355px;left:765.90px;">Notification</span>
<div class="b tip" style="left:1956px;top:582px;width:154.5px;height:55.5px;"></div>
<svg class="b" style="left:0;top:0;pointer-events:none" width="2160" height="1536"><polygon points="2020,582.5 2046,582.5 2033,569" fill="#0c4264"/></svg>
<span class="t" style="top:600.03px;font-size:22px;font-weight:400;color:#fff;letter-spacing:-0.414px;left:1972.00px;">Access Point</span>
<div class="b tip" style="left:27px;top:883.75px;width:186px;height:55px;"></div>
<svg class="b" style="left:0;top:0;pointer-events:none" width="2160" height="1536"><polygon points="107,938.25 133,938.25 120,951.75" fill="#0c4264"/></svg>
<span class="t" style="top:902.03px;font-size:22px;font-weight:400;color:#fff;letter-spacing:-0.539px;left:43.00px;">Tasks Summary</span>
<div class="b tip" style="left:182px;top:1026px;width:154px;height:55px;"></div>
<svg class="b" style="left:0;top:0;pointer-events:none" width="2160" height="1536"><polygon points="245.75,1026.5 271.75,1026.5 258.75,1013" fill="#0c4264"/></svg>
<span class="t" style="top:1044.03px;font-size:22px;font-weight:400;color:#fff;letter-spacing:-0.414px;left:198.00px;">Access Point</span>
<div class="b tip" style="left:946px;top:915.2px;width:271px;height:55px;"></div>
<svg class="b" style="left:0;top:0;pointer-events:none" width="2160" height="1536"><polygon points="1068.2,969.7 1094.2,969.7 1081.2,983.2" fill="#0c4264"/></svg>
<span class="t" style="top:933.02px;font-size:22px;font-weight:400;color:#fff;letter-spacing:-0.178px;left:961.00px;">Conversations Summary</span>
<div class="b tip" style="left:1731.5px;top:1027.5px;width:154.5px;height:55px;"></div>
<svg class="b" style="left:0;top:0;pointer-events:none" width="2160" height="1536"><polygon points="1796,1028.0 1822,1028.0 1809,1014.5" fill="#0c4264"/></svg>
<span class="t" style="top:1045.03px;font-size:22px;font-weight:400;color:#fff;letter-spacing:-0.414px;left:1747.50px;">Access Point</span>
<div class="b tip" style="left:1507px;top:1152px;width:154.5px;height:55px;"></div>
<svg class="b" style="left:0;top:0;pointer-events:none" width="2160" height="1536"><polygon points="1570.75,1152.5 1596.75,1152.5 1583.75,1139" fill="#0c4264"/></svg>
<span class="t" style="top:1170.03px;font-size:22px;font-weight:400;color:#fff;letter-spacing:-0.414px;left:1523.00px;">Access Point</span>
<div class="b tip" style="left:933px;top:1222.6px;width:144px;height:55px;"></div>
<svg class="b" style="left:0;top:0;pointer-events:none" width="2160" height="1536"><polygon points="992,1223.1 1018,1223.1 1005,1209.6" fill="#0c4264"/></svg>
<span class="t" style="top:1240.03px;font-size:22px;font-weight:400;color:#fff;letter-spacing:0.355px;left:948.90px;">Notification</span>
<div class="b tip" style="left:1986px;top:1171.5px;width:144px;height:55px;"></div>
<svg class="b" style="left:0;top:0;pointer-events:none" width="2160" height="1536"><polygon points="2044.5,1172.0 2070.5,1172.0 2057.5,1158.5" fill="#0c4264"/></svg>
<span class="t" style="top:1189.03px;font-size:22px;font-weight:400;color:#fff;letter-spacing:0.355px;left:2001.90px;">Notification</span>
<div class="b" style="left:0;top:0;width:2160px;height:1536px;border:1.5px solid #e9ecef;pointer-events:none"></div>
</div>
</body></html>
